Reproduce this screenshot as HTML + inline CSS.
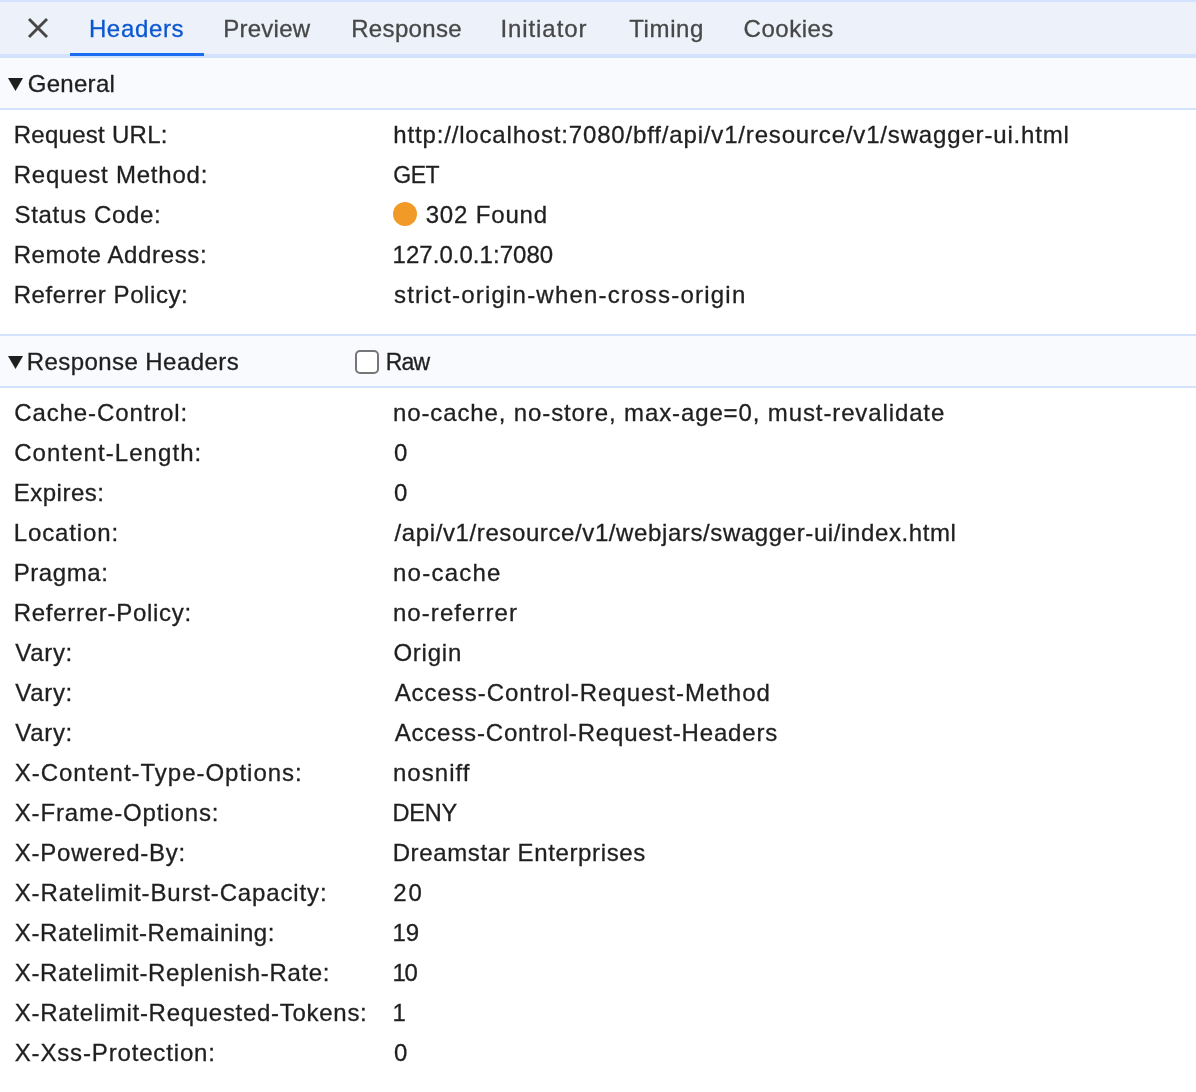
<!DOCTYPE html>
<html><head><meta charset="utf-8"><title>Headers</title>
<style>
html,body{margin:0;padding:0;}
body{width:1196px;height:1092px;overflow:hidden;background:#fff;font-family:"Liberation Sans",sans-serif;font-size:24px;color:#1f1f1f;position:relative;}
.tabbar{position:absolute;left:0;top:0;width:1196px;height:52px;background:#edf1fa;border-top:2px solid #d3e3fd;border-bottom:4px solid #d3e3fd;}
.tab{position:absolute;top:3px;height:52px;line-height:52px;color:#474747;white-space:nowrap;}
.tab.sel{color:#0b57d0;}
.ul{position:absolute;left:70px;top:53px;width:134px;height:3px;background:#1a6cf0;}
.close{position:absolute;left:26px;top:16px;}
.secbg{position:absolute;left:0;width:1196px;height:50px;background:#f8fafd;border-bottom:2px solid #d3e3fd;}
.secbg.r{border-top:2px solid #d3e3fd;}
#txt{position:absolute;left:0;top:0;width:1196px;height:1092px;will-change:transform;-webkit-text-stroke:0.3px;}
.sec{position:absolute;left:0;width:1196px;height:50px;}
.sec.r{margin-top:2px;}
.sec .tri{position:absolute;left:8px;}
.sec .t{position:absolute;left:28px;top:1px;line-height:50px;white-space:nowrap;}
.row{position:absolute;left:0;width:1196px;height:40px;line-height:40px;white-space:nowrap;}
.k{position:absolute;left:14px;top:0;}
.v{position:absolute;left:394px;top:0;}
.dot{position:absolute;left:393px;top:7px;width:24px;height:24px;border-radius:50%;background:#f29a27;}
.cb{position:absolute;left:355px;top:14px;width:20px;height:20px;border:2px solid #767676;border-radius:5px;background:#fff;}
.raw{position:absolute;left:386px;top:1px;line-height:50px;}
</style></head><body>
<div class="tabbar"></div>
<div class="secbg" style="top:58px"></div><div class="secbg r" style="top:334px"></div>
<div id="txt">
<svg class="close" width="24" height="24" viewBox="0 0 24 24"><path d="M3 3 L21 21 M21 3 L3 21" stroke="#474747" stroke-width="2.9" fill="none"/></svg>

<div class="tab sel" style="left:90px"><span class="tt" id="tab0" style="letter-spacing:0.662px;margin-left:-1.13px">Headers</span></div>
<div class="tab" style="left:224px"><span class="tt" id="tab1" style="letter-spacing:0.256px;margin-left:-0.81px">Preview</span></div>
<div class="tab" style="left:352px"><span class="tt" id="tab2" style="letter-spacing:0.333px;margin-left:-0.81px">Response</span></div>
<div class="tab" style="left:502px"><span class="tt" id="tab3" style="letter-spacing:0.926px;margin-left:-1.61px">Initiator</span></div>
<div class="tab" style="left:628px"><span class="tt" id="tab4" style="letter-spacing:0.627px;margin-left:1.18px">Timing</span></div>
<div class="tab" style="left:744px"><span class="tt" id="tab5" style="letter-spacing:0.510px;margin-left:-0.43px">Cookies</span></div>
<div class="ul"></div>
<div class="sec" style="top:58px"><svg class="tri" style="top:20px" width="15" height="13" viewBox="0 0 15 13"><path d="M0 0 H15 L7.5 13 Z" fill="#1f1f1f"/></svg><div class="t"><span class="st" id="sec0" style="letter-spacing:0.306px;margin-left:-0.34px">General</span></div></div>
<div class="row" style="top:115px"><div class="k"><span class="kk" id="gk0" style="letter-spacing:0.282px;margin-left:-0.35px">Request URL:</span></div><div class="v"><span class="vv" id="gv0" style="letter-spacing:0.831px;margin-left:-0.73px">http://localhost:7080/bff/api/v1/resource/v1/swagger-ui.html</span></div></div>
<div class="row" style="top:155px"><div class="k"><span class="kk" id="gk1" style="letter-spacing:0.781px;margin-left:-0.35px">Request Method:</span></div><div class="v"><span class="vv" id="gv1" style="letter-spacing:-0.491px;margin-left:-0.69px;font-size:23px">GET</span></div></div>
<div class="row" style="top:195px"><div class="k"><span class="kk" id="gk2" style="letter-spacing:0.656px;margin-left:0.60px">Status Code:</span></div><span class="dot"></span><div class="v" style="left:427px"><span class="vv" id="gv2" style="letter-spacing:0.838px;margin-left:-1.37px">302 Found</span></div></div>
<div class="row" style="top:235px"><div class="k"><span class="kk" id="gk3" style="letter-spacing:0.631px;margin-left:-0.35px">Remote Address:</span></div><div class="v"><span class="vv" id="gv3" style="letter-spacing:0.027px;margin-left:-1.40px">127.0.0.1:7080</span></div></div>
<div class="row" style="top:275px"><div class="k"><span class="kk" id="gk4" style="letter-spacing:0.580px;margin-left:-0.35px">Referrer Policy:</span></div><div class="v"><span class="vv" id="gv4" style="letter-spacing:1.218px;margin-left:-0.04px">strict-origin-when-cross-origin</span></div></div>
<div class="sec r" style="top:334px"><svg class="tri" style="top:20px" width="15" height="13" viewBox="0 0 15 13"><path d="M0 0 H15 L7.5 13 Z" fill="#1f1f1f"/></svg><div class="t"><span class="st" id="sec1" style="letter-spacing:0.436px;margin-left:-1.34px">Response Headers</span></div><div class="cb"></div><div class="raw"><span class="st" id="raw" style="letter-spacing:-0.852px;margin-left:-0.20px;font-size:23px">Raw</span></div></div>
<div class="row" style="top:393px"><div class="k"><span class="kk" id="rk0" style="letter-spacing:0.895px;margin-left:0.21px">Cache-Control:</span></div><div class="v"><span class="vv" id="rv0" style="letter-spacing:0.883px;margin-left:-1.05px">no-cache, no-store, max-age=0, must-revalidate</span></div></div>
<div class="row" style="top:433px"><div class="k"><span class="kk" id="rk1" style="letter-spacing:1.065px;margin-left:0.21px">Content-Length:</span></div><div class="v"><span class="vv" id="rv1" style="letter-spacing:0.000px;margin-left:-0.01px">0</span></div></div>
<div class="row" style="top:473px"><div class="k"><span class="kk" id="rk2" style="letter-spacing:0.515px;margin-left:-0.35px">Expires:</span></div><div class="v"><span class="vv" id="rv2" style="letter-spacing:0.000px;margin-left:-0.01px">0</span></div></div>
<div class="row" style="top:513px"><div class="k"><span class="kk" id="rk3" style="letter-spacing:0.889px;margin-left:-0.35px">Location:</span></div><div class="v"><span class="vv" id="rv3" style="letter-spacing:0.607px;margin-left:0.56px">/api/v1/resource/v1/webjars/swagger-ui/index.html</span></div></div>
<div class="row" style="top:553px"><div class="k"><span class="kk" id="rk4" style="letter-spacing:0.591px;margin-left:-0.35px">Pragma:</span></div><div class="v"><span class="vv" id="rv4" style="letter-spacing:1.250px;margin-left:-1.05px">no-cache</span></div></div>
<div class="row" style="top:593px"><div class="k"><span class="kk" id="rk5" style="letter-spacing:0.723px;margin-left:-0.35px">Referrer-Policy:</span></div><div class="v"><span class="vv" id="rv5" style="letter-spacing:1.064px;margin-left:-1.05px">no-referrer</span></div></div>
<div class="row" style="top:633px"><div class="k"><span class="kk" id="rk6" style="letter-spacing:0.699px;margin-left:1.26px">Vary:</span></div><div class="v"><span class="vv" id="rv6" style="letter-spacing:0.770px;margin-left:-0.62px">Origin</span></div></div>
<div class="row" style="top:673px"><div class="k"><span class="kk" id="rk7" style="letter-spacing:0.699px;margin-left:1.26px">Vary:</span></div><div class="v"><span class="vv" id="rv7" style="letter-spacing:0.965px;margin-left:0.65px">Access-Control-Request-Method</span></div></div>
<div class="row" style="top:713px"><div class="k"><span class="kk" id="rk8" style="letter-spacing:0.699px;margin-left:1.26px">Vary:</span></div><div class="v"><span class="vv" id="rv8" style="letter-spacing:0.820px;margin-left:0.65px">Access-Control-Request-Headers</span></div></div>
<div class="row" style="top:753px"><div class="k"><span class="kk" id="rk9" style="letter-spacing:0.976px;margin-left:0.75px">X-Content-Type-Options:</span></div><div class="v"><span class="vv" id="rv9" style="letter-spacing:1.034px;margin-left:-1.05px">nosniff</span></div></div>
<div class="row" style="top:793px"><div class="k"><span class="kk" id="rk10" style="letter-spacing:0.865px;margin-left:0.75px">X-Frame-Options:</span></div><div class="v"><span class="vv" id="rv10" style="letter-spacing:-0.239px;margin-left:-1.40px;font-size:23.5px">DENY</span></div></div>
<div class="row" style="top:833px"><div class="k"><span class="kk" id="rk11" style="letter-spacing:0.758px;margin-left:0.75px">X-Powered-By:</span></div><div class="v"><span class="vv" id="rv11" style="letter-spacing:0.627px;margin-left:-1.35px">Dreamstar Enterprises</span></div></div>
<div class="row" style="top:873px"><div class="k"><span class="kk" id="rk12" style="letter-spacing:0.864px;margin-left:0.75px">X-Ratelimit-Burst-Capacity:</span></div><div class="v"><span class="vv" id="rv12" style="letter-spacing:1.987px;margin-left:-0.74px">20</span></div></div>
<div class="row" style="top:913px"><div class="k"><span class="kk" id="rk13" style="letter-spacing:0.620px;margin-left:0.75px">X-Ratelimit-Remaining:</span></div><div class="v"><span class="vv" id="rv13" style="letter-spacing:-0.111px;margin-left:-1.40px">19</span></div></div>
<div class="row" style="top:953px"><div class="k"><span class="kk" id="rk14" style="letter-spacing:0.664px;margin-left:0.75px">X-Ratelimit-Replenish-Rate:</span></div><div class="v"><span class="vv" id="rv14" style="letter-spacing:-1.380px;margin-left:-1.40px">10</span></div></div>
<div class="row" style="top:993px"><div class="k"><span class="kk" id="rk15" style="letter-spacing:0.710px;margin-left:0.75px">X-Ratelimit-Requested-Tokens:</span></div><div class="v"><span class="vv" id="rv15" style="letter-spacing:0.000px;margin-left:-1.40px">1</span></div></div>
<div class="row" style="top:1033px"><div class="k"><span class="kk" id="rk16" style="letter-spacing:0.841px;margin-left:0.75px">X-Xss-Protection:</span></div><div class="v"><span class="vv" id="rv16" style="letter-spacing:0.000px;margin-left:-0.01px">0</span></div></div>
</div></body></html>
